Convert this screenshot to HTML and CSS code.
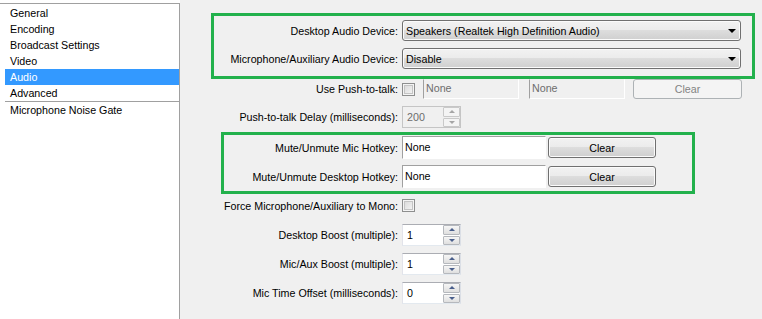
FILE: index.html
```html
<!DOCTYPE html>
<html lang="en">
<head>
<meta charset="UTF-8" />
<title>Settings - Audio</title>
<link rel="stylesheet" href="styles.css">
</head>
<body>
<div class="window">
  <!-- Settings categories -->
  <div class="sidebar">
    <ul class="nav">
      <li>General</li>
      <li>Encoding</li>
      <li>Broadcast Settings</li>
      <li>Video</li>
      <li class="selected">Audio</li>
      <li>Advanced</li>
      <li class="plugin">Microphone Noise Gate</li>
    </ul>
  </div>

  <!-- Audio page -->
  <div class="pane">
    <div class="group devices">
      <div class="row">
        <label>Desktop Audio Device:</label>
        <div class="combo"><span>Speakers (Realtek High Definition Audio)</span><i class="caret"></i></div>
      </div>
      <div class="row">
        <label>Microphone/Auxiliary Audio Device:</label>
        <div class="combo"><span>Disable</span><i class="caret"></i></div>
      </div>
    </div>

    <div class="row ptt">
      <label>Use Push-to-talk:</label>
      <span class="check"></span>
      <div class="field disabled">None</div>
      <div class="field disabled second">None</div>
      <div class="btn disabled wide">Clear</div>
    </div>

    <div class="row delay">
      <label>Push-to-talk Delay (milliseconds):</label>
      <div class="spin disabled">
        <span class="val">200</span>
        <span class="arrows"><b class="up"></b><b class="down"></b></span>
      </div>
    </div>

    <div class="group hotkeys">
      <div class="row">
        <label>Mute/Unmute Mic Hotkey:</label>
        <div class="field hotkey">None</div>
        <div class="btn">Clear</div>
      </div>
      <div class="row">
        <label>Mute/Unmute Desktop Hotkey:</label>
        <div class="field hotkey">None</div>
        <div class="btn">Clear</div>
      </div>
    </div>

    <div class="row mono">
      <label>Force Microphone/Auxiliary to Mono:</label>
      <span class="check"></span>
    </div>

    <div class="row boost">
      <label>Desktop Boost (multiple):</label>
      <div class="spin">
        <span class="val">1</span>
        <span class="arrows"><b class="up"></b><b class="down"></b></span>
      </div>
    </div>
    <div class="row boost">
      <label>Mic/Aux Boost (multiple):</label>
      <div class="spin">
        <span class="val">1</span>
        <span class="arrows"><b class="up"></b><b class="down"></b></span>
      </div>
    </div>
    <div class="row boost">
      <label>Mic Time Offset (milliseconds):</label>
      <div class="spin">
        <span class="val">0</span>
        <span class="arrows"><b class="up"></b><b class="down"></b></span>
      </div>
    </div>
  </div>
</div>
</body>
</html>
```

FILE: styles.css
```css
body {
  margin: 0; padding: 0;
  font-family: "Liberation Sans", Arial, sans-serif;
  font-size: 10.7px;
  color: #000;
  background: #f0f0f0;
}
.window {
  display: flex;
  height: 100vh;
}

/* Category list */
.sidebar {
  width: 180px;
  flex: none;
  background: #fff;
  display: flex;
  flex-direction: column;
}
.nav {
  flex: 1;
  list-style: none;
  margin: 3px 0 0;
  padding: 1px 0 0 5px;
  border-top: 1px solid #a0a0a0;
  border-right: 1px solid #a0a0a0;
}
.nav li {
  height: 16px;
  line-height: 16px;
  padding-left: 5px;
  white-space: nowrap;
}
.nav li.selected {
  background: #3399ff;
  color: #fff;
}
.nav li.plugin {
  border-top: 1px solid #a0a0a0;
}

/* Settings pane */
.pane {
  flex: 1;
  padding-top: 13px;
  display: flex;
  flex-direction: column;
}
.row {
  display: flex;
  align-items: center;
  gap: 4px;
}
.row label {
  flex: none;
  width: 218px;
  text-align: right;
  white-space: nowrap;
}
.group {
  box-sizing: border-box;
  border: 3px solid #22b14c;
  display: flex;
  flex-direction: column;
}
.group.devices {
  margin-left: 31px;
  width: 544px;
  padding: 4px 0 7px;
  gap: 7px;
}
.group.devices label { width: 184px; }
.group.devices .row { height: 21px; }

.group.hotkeys {
  margin-top: 4px;
  margin-left: 41px;
  width: 474px;
  padding: 1px 0 3px;
  gap: 6px;
}
.group.hotkeys label { width: 174px; }
.group.hotkeys .row { height: 23px; gap: 2px; }
.group.hotkeys label { margin-right: 2px; }

.ptt { height: 20px; }
.ptt .field { margin-left: 4px; }
.ptt .field.second { margin-left: 6px; }
.ptt .btn { margin-left: 4px; }
.delay { margin-top: 7px; height: 22px; }
.mono { margin-top: 5px; height: 13px; }
.boost { margin-top: 7px; height: 22px; }
.mono + .boost { margin-top: 12px; }

/* Controls */
.combo, .btn {
  box-sizing: border-box;
  height: 21px;
  border: 1px solid #707070;
  border-radius: 3px;
  background: linear-gradient(#f2f2f2, #ebebeb 50%, #dddddd 50%, #cfcfcf);
  box-shadow: inset 0 0 0 1px #fbfbfb;
}
.combo {
  width: 339px;
  display: flex;
  align-items: center;
  justify-content: space-between;
  padding-left: 3px;
}
.caret {
  width: 0; height: 0;
  border-left: 4px solid transparent;
  border-right: 4px solid transparent;
  border-top: 4px solid #000;
  margin-right: 4px;
}
.btn {
  width: 108px;
  display: flex;
  align-items: center;
  justify-content: center;
}
.btn.wide { width: 109px; height: 20px; }
.btn.disabled {
  border-color: #adb2b5;
  background: #f4f4f4;
  box-shadow: none;
  color: #838383;
}

.field {
  box-sizing: border-box;
  background: #fff;
  border: 1px solid;
  border-color: #a0a0a0 #fff #fff #a0a0a0;
  padding-left: 2px;
}
.field.hotkey {
  width: 144px;
  height: 23px;
  line-height: 21px;
}
.field.disabled {
  align-self: stretch;
  width: 96px;
  background: #f0f0f0;
  border-top-color: transparent;
  color: #6d6d6d;
  line-height: 14px;
  padding-top: 1px;
}

.check {
  box-sizing: border-box;
  width: 13px;
  height: 13px;
  border: 1px solid #8e8f8f;
  background: linear-gradient(135deg, #d6d6d6, #f8f8f8);
  box-shadow: inset 0 0 0 1px #f4f4f4, inset 0 0 0 2px #c4c4c4;
}

.spin {
  box-sizing: border-box;
  width: 59px;
  height: 22px;
  display: flex;
  background: #fff;
  border: 1px solid #abadb3;
  border-color: #abadb3 #dbdfe6 #e3e9ef #e2e3ea;
}
.spin .val {
  flex: 1;
  align-self: center;
  padding-left: 4px;
}
.spin .arrows {
  width: 17px;
  display: flex;
  flex-direction: column;
  gap: 1px;
}
.spin .arrows b {
  flex: 1;
  box-sizing: border-box;
  border: 1px solid #b5b8bd;
  border-radius: 1px;
  background: linear-gradient(#f6f6f6, #dfdfdf);
  display: flex;
  align-items: center;
  justify-content: center;
}
.spin .arrows b::after {
  content: "";
  width: 0; height: 0;
  border-left: 3px solid transparent;
  border-right: 3px solid transparent;
}
.spin .arrows .up::after { border-bottom: 3px solid #4a5f8c; }
.spin .arrows .down::after { border-top: 3px solid #4a5f8c; }

.spin.disabled {
  background: #f0f0f0;
  border-color: #c5c5c5;
  color: #6d6d6d;
}
.spin.disabled .arrows b {
  border-color: #c9c9c9;
  background: #f4f4f4;
}
.spin.disabled .arrows .up::after { border-bottom-color: #a5a5a5; }
.spin.disabled .arrows .down::after { border-top-color: #a5a5a5; }
```
